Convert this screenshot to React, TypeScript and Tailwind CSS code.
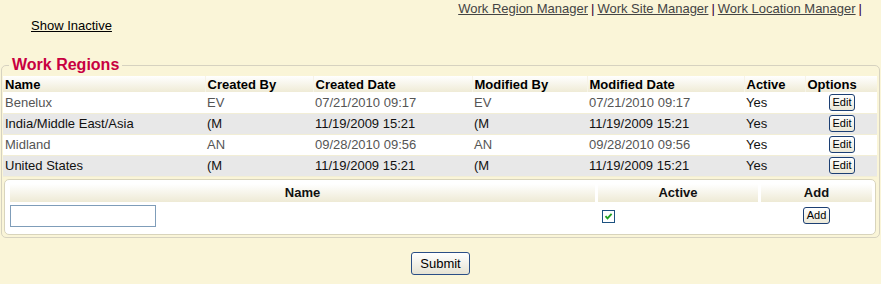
import React from "react";

const REGIONS = [
  { name: "Benelux", createdBy: "EV", created: "07/21/2010 09:17", modifiedBy: "EV", modified: "07/21/2010 09:17", active: "Yes" },
  { name: "India/Middle East/Asia", createdBy: "(M", created: "11/19/2009 15:21", modifiedBy: "(M", modified: "11/19/2009 15:21", active: "Yes" },
  { name: "Midland", createdBy: "AN", created: "09/28/2010 09:56", modifiedBy: "AN", modified: "09/28/2010 09:56", active: "Yes" },
  { name: "United States", createdBy: "(M", created: "11/19/2009 15:21", modifiedBy: "(M", modified: "11/19/2009 15:21", active: "Yes" },
];

const COLS = [
  { label: "Name", w: "w-[202px]" },
  { label: "Created By", w: "w-[108px]" },
  { label: "Created Date", w: "w-[159px]" },
  { label: "Modified By", w: "w-[115px]" },
  { label: "Modified Date", w: "w-[157px]" },
  { label: "Active", w: "w-[61px]" },
  { label: "Options", w: "w-[72px]" },
];

function XpButton({ label, small }: { label: string; small?: boolean }) {
  return (
    <button
      type="button"
      className={
        small
          ? "h-[17px] px-[3px] text-[11px] leading-[13px] text-black border border-[#1c3f73] rounded-[3px] bg-gradient-to-b from-white to-[#ece9d8]"
          : "h-[23px] px-[8px] text-[13px] leading-[15px] text-black border border-[#2a4e86] rounded-[3px] bg-gradient-to-b from-white to-[#e6e3d3]"
      }
    >
      {label}
    </button>
  );
}

export default function App() {
  return (
    <div className="w-[881px] h-[284px] bg-[#faf5d8] text-[13px] font-['Liberation_Sans',Arial,sans-serif] overflow-hidden">
      {/* Top links */}
      <div className="flex justify-end pr-[19px] pt-[1px] leading-[16px] text-[#444]">
        <a href="#" className="underline">Work Region Manager</a>
        <span className="text-[#330033] mx-[3px]">|</span>
        <a href="#" className="underline">Work Site Manager</a>
        <span className="text-[#330033] mx-[3px]">|</span>
        <a href="#" className="underline">Work Location Manager</a>
        <span className="text-[#330033] ml-[3px]">|</span>
      </div>

      <div className="pl-[31px] leading-[16px] mt-[1px]">
        <a href="#" className="underline text-black">Show Inactive</a>
      </div>

      {/* Work Regions */}
      <fieldset className="mt-[22px] mx-[1px] border border-[#d6d2c0] rounded-[5px] px-[1px] pt-[2px] pb-[2px]">
        <legend className="ml-[6px] px-[3px] text-[16px] font-bold leading-[18px] text-[#c80041]">
          Work Regions
        </legend>

        <table className="w-[874px] border-collapse table-fixed">
          <thead>
            <tr className="bg-gradient-to-b from-white to-[#efebd6]">
              {COLS.map((c) => (
                <th key={c.label} className={`${c.w} h-[16px] p-0 pl-[2px] text-left font-bold text-black leading-[15px] border-l border-[#f7f4e8] first:border-l-0`}>
                  {c.label}
                </th>
              ))}
            </tr>
          </thead>
          <tbody>
            {REGIONS.map((r, i) => {
              const alt = i % 2 === 1;
              const cell = `p-0 pl-[2px] h-[21px] leading-[15px] ${alt ? "text-[#111]" : "text-[#555]"}`;
              return (
                <tr key={r.name} className={`${alt ? "bg-[#e8e8e8]" : "bg-white"} border-b border-[#f2eed6]`}>
                  <td className={cell}>{r.name}</td>
                  <td className={cell}>{r.createdBy}</td>
                  <td className={cell}>{r.created}</td>
                  <td className={cell}>{r.modifiedBy}</td>
                  <td className={cell}>{r.modified}</td>
                  <td className={`${cell} !text-[#111]`}>{r.active}</td>
                  <td className="p-0 text-center align-middle">
                    <div className="flex justify-center pl-[2px]">
                      <XpButton label="Edit" small />
                    </div>
                  </td>
                </tr>
              );
            })}
          </tbody>
        </table>

        {/* Add row box */}
        <div className="mt-[2px] ml-[1px] w-[872px] bg-white border border-[#d8d4bc] rounded-[5px] px-[5px] pt-[4px] pb-[7px]">
          <div className="grid grid-cols-[585px_160px_111px] gap-x-[3px]">
            <div className="h-[18px] bg-gradient-to-b from-white to-[#eeead5] text-center font-bold leading-[18px] text-[#111]">Name</div>
            <div className="h-[18px] bg-gradient-to-b from-white to-[#eeead5] text-center font-bold leading-[18px] text-[#111]">Active</div>
            <div className="h-[18px] bg-gradient-to-b from-white to-[#eeead5] text-center font-bold leading-[18px] text-[#111]">Add</div>

            <div className="pt-[3px]">
              <input type="text" className="w-[146px] h-[22px] border border-[#7f9db9] bg-white outline-none px-[2px]" />
            </div>
            <div className="pt-[8px] pl-[4px]">
              <span className="flex items-center justify-center w-[13px] h-[13px] border border-[#1c5180] bg-white">
                <svg width="9" height="9" viewBox="0 0 9 9">
                  <path d="M1.5 4.2 L3.5 6.4 L7.6 1.8" fill="none" stroke="#21a121" strokeWidth="1.8" />
                </svg>
              </span>
            </div>
            <div className="pt-[5px] flex justify-center">
              <XpButton label="Add" small />
            </div>
          </div>
        </div>
      </fieldset>

      <div className="flex justify-center mt-[14px]">
        <XpButton label="Submit" />
      </div>
    </div>
  );
}
